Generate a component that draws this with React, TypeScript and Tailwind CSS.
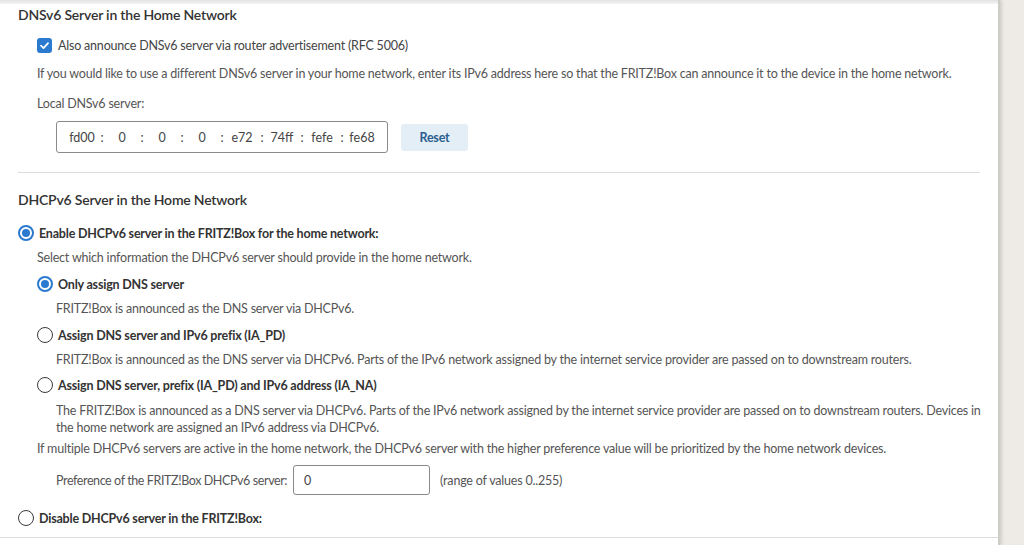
import React from "react";

function Checkbox() {
  return (
    <span className="w-[15px] h-[15px] rounded-[3px] bg-[#2a7ad0] flex items-center justify-center shrink-0">
      <svg width="11" height="11" viewBox="0 0 12 12" fill="none">
        <path d="M2.2 6.2 L4.9 8.8 L9.9 3.4" stroke="white" strokeWidth="1.9" strokeLinecap="round" strokeLinejoin="round" />
      </svg>
    </span>
  );
}

function Radio({ checked }: { checked?: boolean }) {
  return checked ? (
    <span className="w-[16px] h-[16px] rounded-full border-2 border-[#2a7ad0] bg-white flex items-center justify-center shrink-0">
      <span className="w-[8px] h-[8px] rounded-full bg-[#2a7ad0]" />
    </span>
  ) : (
    <span className="w-[16px] h-[16px] rounded-full border-[1.5px] border-[#3a3a3a] bg-white shrink-0" />
  );
}

const segments = ["fd00", "0", "0", "0", "e72", "74ff", "fefe", "fe68"];

export default function App() {
  return (
    <div
      className="min-h-screen bg-[#eeebe6] flex text-[12.5px] leading-[17px] tracking-[-0.2px] text-[#555]"
      style={{ fontFamily: "Lato, 'Liberation Sans', sans-serif" }}
    >
      <div className="w-[1000px] h-[545px] bg-white border-r-[2px] border-[#cfcdc8] shadow-[2px_0_3px_rgba(0,0,0,0.12)] flex flex-col">
        <div className="h-[4px] bg-gradient-to-b from-[#e2e2e2] to-[#f4f4f4]" />

        {/* DNSv6 */}
        <div className="px-[18px]">
          <h2 className="mt-[1px] h-[20px] leading-[20px] text-[14px] font-semibold text-[#333]">
            DNSv6 Server in the Home Network
          </h2>
          <div className="pl-[19px]">
            <label className="mt-[10px] h-[20px] flex items-center gap-[6px] text-[#444]">
              <Checkbox />
              Also announce DNSv6 server via router advertisement (RFC 5006)
            </label>
            <p className="mt-[10px]">
              If you would like to use a different DNSv6 server in your home network, enter its IPv6 address here so that the FRITZ!Box can announce it to the device in the home network.
            </p>
            <p className="mt-[13px]">Local DNSv6 server:</p>
            <div className="mt-[9px] pl-[19px] flex items-center gap-[13px]">
              <div className="w-[332px] h-[32px] border border-[#8a8a8a] rounded-[3px] flex items-center pl-[9px] text-[#444] tracking-normal">
                {segments.map((s, i) => (
                  <React.Fragment key={i}>
                    {i > 0 && <span className="w-[8px] text-center">:</span>}
                    <span className="w-[32px] text-center">{s}</span>
                  </React.Fragment>
                ))}
              </div>
              <button className="w-[67px] h-[27px] rounded-[3px] bg-[#e4eef7] text-[#2b5f8e] font-bold">
                Reset
              </button>
            </div>
          </div>
          <div className="mt-[19px] h-px bg-[#dcdcdc]" />
        </div>

        {/* DHCPv6 */}
        <div className="px-[18px]">
          <h2 className="mt-[17px] h-[20px] leading-[20px] text-[14px] font-semibold text-[#333]">
            DHCPv6 Server in the Home Network
          </h2>
          <label className="mt-[13px] h-[20px] flex items-center gap-[5px] font-bold text-[#333]">
            <Radio checked />
            Enable DHCPv6 server in the FRITZ!Box for the home network:
          </label>
          <div className="pl-[19px]">
            <p className="mt-[6px]">Select which information the DHCPv6 server should provide in the home network.</p>
            <label className="mt-[8px] h-[20px] flex items-center gap-[5px] font-bold text-[#333]">
              <Radio checked />
              Only assign DNS server
            </label>
            <p className="mt-[6px] pl-[19px]">FRITZ!Box is announced as the DNS server via DHCPv6.</p>
            <label className="mt-[8px] h-[20px] flex items-center gap-[5px] font-bold text-[#333]">
              <Radio />
              Assign DNS server and IPv6 prefix (IA_PD)
            </label>
            <p className="mt-[6px] pl-[19px]">
              FRITZ!Box is announced as the DNS server via DHCPv6. Parts of the IPv6 network assigned by the internet service provider are passed on to downstream routers.
            </p>
            <label className="mt-[7px] h-[20px] flex items-center gap-[5px] font-bold text-[#333]">
              <Radio />
              Assign DNS server, prefix (IA_PD) and IPv6 address (IA_NA)
            </label>
            <p className="mt-[7px] pl-[19px] mr-[-12px]">
              The FRITZ!Box is announced as a DNS server via DHCPv6. Parts of the IPv6 network assigned by the internet service provider are passed on to downstream routers. Devices in the home network are assigned an IPv6 address via DHCPv6.
            </p>
            <p className="mt-[4px]">
              If multiple DHCPv6 servers are active in the home network, the DHCPv6 server with the higher preference value will be prioritized by the home network devices.
            </p>
            <div className="mt-[8px] pl-[19px] flex items-center">
              <span className="tracking-[-0.4px]">Preference of the FRITZ!Box DHCPv6 server:</span>
              <div className="ml-[6px] w-[137px] h-[30px] border border-[#8a8a8a] rounded-[3px] flex items-center pl-[10px] text-[#444]">
                0
              </div>
              <span className="ml-[10px]">(range of values 0..255)</span>
            </div>
          </div>
          <label className="mt-[13px] h-[20px] flex items-center gap-[5px] font-bold text-[#333]">
            <Radio />
            Disable DHCPv6 server in the FRITZ!Box:
          </label>
        </div>
        <div className="mt-[9px] h-px bg-[#dcdcdc]" />
      </div>
    </div>
  );
}
